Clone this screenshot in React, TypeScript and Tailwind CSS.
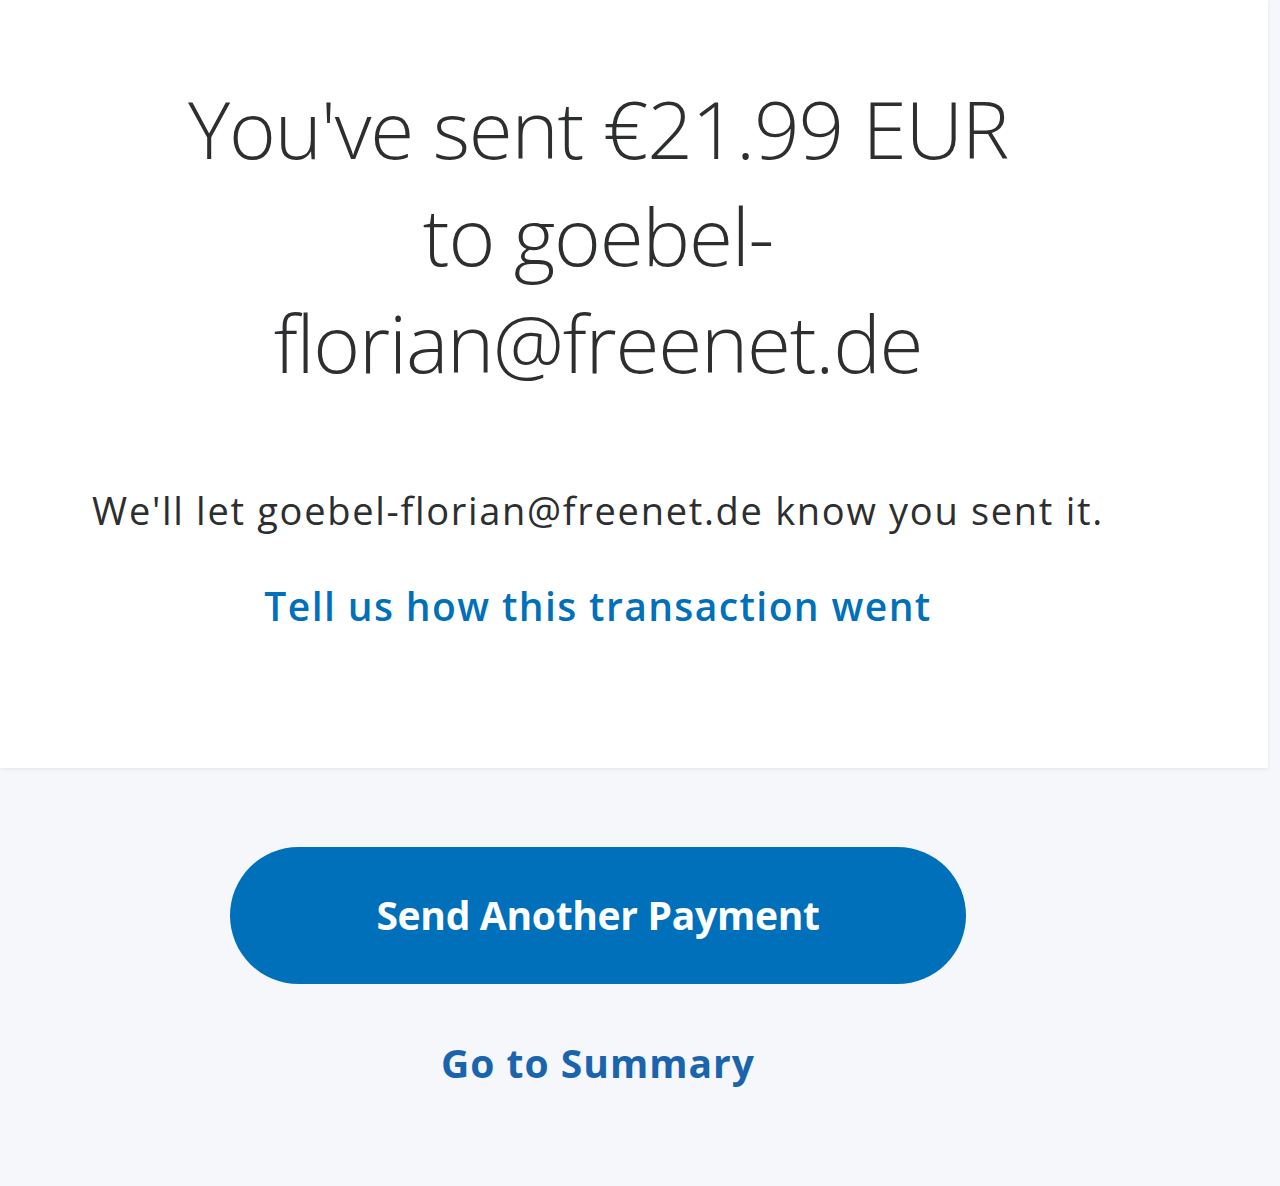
export default function App() {
  return (
    <div className="min-h-[1186px] w-[1280px] bg-[#f5f7fa] font-['Open_Sans',sans-serif] text-[#2c2e2f]">
      <div className="flex h-[768px] w-[1268px] flex-col items-center bg-white pr-[72px] pt-[74px] shadow-[0_1px_4px_rgba(0,0,0,0.08)]">
        <h1 className="w-[880px] text-center text-[80px] font-light leading-[107px] tracking-[-1.2px]">
          You've sent €21.99 EUR to goebel-florian@freenet.de
        </h1>
        <p className="mt-[90px] text-[38px] leading-[50px] tracking-[1.7px]">
          We'll let goebel-florian@freenet.de know you sent it.
        </p>
        <a href="#" className="mt-[46px] text-[39px] font-semibold leading-[50px] tracking-[1.4px] text-[#0070ba]">
          Tell us how this transaction went
        </a>
      </div>
      <div className="flex flex-col items-center pr-[84px] pt-[79px]">
        <button className="h-[137px] w-[736px] rounded-full bg-[#0070ba] text-[39px] font-bold tracking-[-0.3px] text-white">
          Send Another Payment
        </button>
        <a href="#" className="mt-[54px] text-[39px] font-bold leading-[50px] tracking-[1px] text-[#1a64ae]">
          Go to Summary
        </a>
      </div>
    </div>
  );
}
